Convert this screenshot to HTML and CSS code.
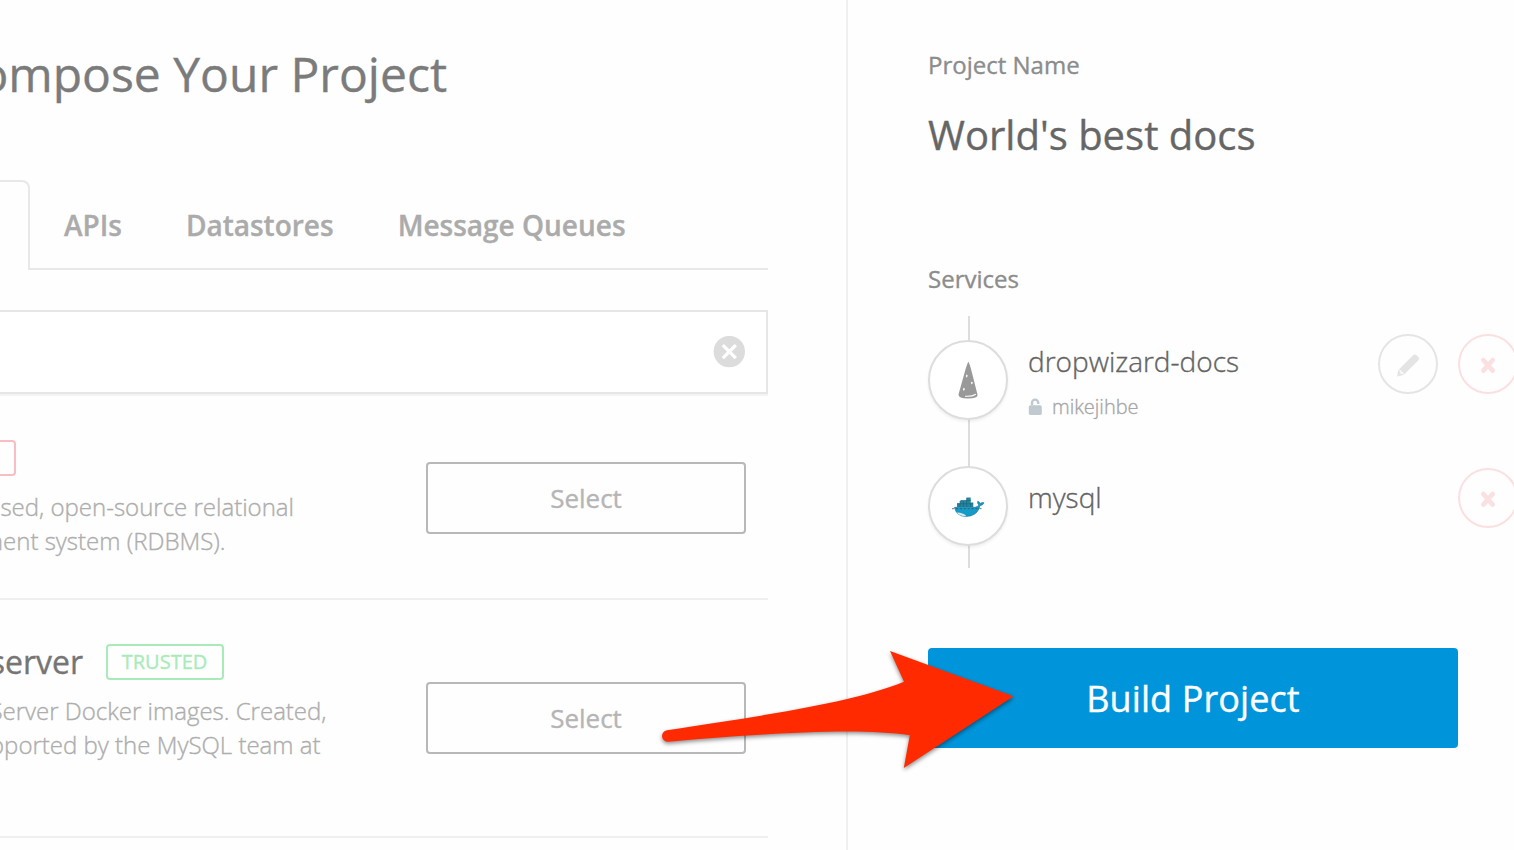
FILE: index.html
```
<!DOCTYPE html>
<html lang="en">
<head>
<meta charset="utf-8">
<title>Compose Your Project</title>
<link rel="stylesheet" href="styles.css">
</head>
<body>
<main class="compose">
  <h1 class="title">Compose Your Project</h1>
  <nav class="tabs">
    <span class="tab-active"></span>
    <span class="tab">APIs</span>
    <span class="tab">Datastores</span>
    <span class="tab">Message Queues</span>
  </nav>
  <div class="search">
    <svg width="32" height="32" viewBox="0 0 32 32"><circle cx="16.3" cy="15.6" r="15.7" fill="#dcdcdc"/><path d="M9.8 9.1 22.8 22.1M22.8 9.1 9.8 22.1" stroke="#fff" stroke-width="3.4"/></svg>
  </div>
  <section class="item item-first">
    <div class="info">
      <div class="heading heading-first"><span class="badge badge-red"></span></div>
      <p class="line line-a">used, open-source relational</p>
      <p class="line line-b">management system (RDBMS).</p>
    </div>
    <button class="select">Select</button>
  </section>
  <section class="item item-second">
    <div class="info">
      <div class="heading heading-second"><span class="name">server</span><span class="badge badge-green">TRUSTED</span></div>
      <p class="line line-c">Server Docker images. Created,</p>
      <p class="line line-d">supported by the MySQL team at</p>
    </div>
    <button class="select">Select</button>
  </section>
</main>
<aside class="summary">
  <div class="label">Project Name</div>
  <div class="project">World's best docs</div>
  <div class="label label-services">Services</div>
  <ul class="services">
    <li class="service">
      <span class="avatar">
        <svg width="24" height="40" viewBox="0 0 24 40"><path d="M12.3 1.5Q11 4.5 9.6 9L2.5 34.5Q2.2 38.6 12 38.6Q21.7 38.4 21.6 35L15 9Q13.8 4.2 12.3 1.5Z" fill="#999"/><g fill="#fff"><path d="m10.8 14.2.9 1.6-.9 2-1-1.8ZM15.9 21.4l1 1.4-1 1.8-1.1-1.7ZM7.9 27.5l1 1.5-1 2.1-1-1.7Z"/></g><path d="M9 36.2Q16 36.8 19.8 34.2" stroke="#fff" stroke-width="1.1" fill="none"/></svg>
      </span>
      <div class="details">
        <div class="service-name">dropwizard-docs</div>
        <div class="owner">
          <svg width="14" height="18" viewBox="0 0 14 18"><path d="M4 7V4.7a3.1 3.1 0 0 1 6.2 0V6" fill="none" stroke="#bfc9cf" stroke-width="2.4"/><rect x=".8" y="7.3" width="13" height="9.7" rx="1.7" fill="#bfc9cf"/></svg>
          <span>mikejihbe</span>
        </div>
      </div>
      <div class="actions">
        <span class="action edit"><svg width="24" height="26" viewBox="0 0 24 26"><path d="M1 24.5 2.3 18 16.8 3.5Q18.8 1.6 20.8 3.4L22.4 5Q24 6.7 22.2 8.6L7.6 23Z" fill="#e4e4e4"/><path d="M3.2 18.3 4.9 19 4.8 20.9 6.7 20.9 7.4 22.6" fill="none" stroke="#fefefe" stroke-width="1.1"/></svg></span>
        <span class="action remove"><svg width="16" height="18" viewBox="0 0 16 18"><path d="M3.3 4 12.7 14.6M12.7 4 3.3 14.6" stroke="#fbe0e1" stroke-width="4.6" stroke-linecap="round"/></svg></span>
      </div>
    </li>
    <li class="service service-second">
      <span class="avatar">
        <svg width="34" height="22" viewBox="0 0 34 22"><path d="M6 12V8.2h3V5.4h6.5V2.5h4.2v5h2.6V12Z" fill="#24859f"/><path d="M9 6v6M12.4 6v6M15.7 3v9M19.5 8v4M6 8.8h16M10 5.5h10" stroke="#17677d" stroke-width=".6"/><path d="M3.5 12.3H24Q27 11.8 27.8 9.9 26 8.5 26.8 6.2 28.9 7 29.3 8.5 31 7 33 7.7 32 10.3 28.9 10.7 26.7 21.3 14.8 21.5 5.3 21.3 3.5 12.3Z" fill="#159bca" stroke="#176c8c" stroke-width=".6"/><path d="M5.8 17.5Q12 17.4 15.5 21.2 8.4 21.4 5.8 17.5Z" fill="#d8e9ee"/><path d="M1 13.7H32" stroke="#355866" stroke-width=".8" stroke-dasharray="2.2 1.7"/></svg>
      </span>
      <div class="details"><div class="service-name">mysql</div></div>
      <div class="actions">
        <span class="action remove"><svg width="16" height="18" viewBox="0 0 16 18"><path d="M3.3 4 12.7 14.6M12.7 4 3.3 14.6" stroke="#fbe0e1" stroke-width="4.6" stroke-linecap="round"/></svg></span>
      </div>
    </li>
  </ul>
  <button class="build">Build Project</button>
</aside>
<svg class="arrow" width="370" height="130" viewBox="655 645 370 130"><path d="M890 651 1013.7 696.3 903.8 768 909.8 735.2C860 728 780 732.2 668.5 741.7A5.6 5.6 0 0 1 667 730.3C745 718 850 704 904 681.7Z" fill="#ff2a00"/></svg>
</body>
</html>
```
FILE: styles.css
```
* { box-sizing: border-box; }
body {
  margin: 0;
  width: 1514px;
  height: 850px;
  display: flex;
  overflow: hidden;
  position: relative;
  background: #fefefe;
  font-family: "Open Sans", sans-serif;
  -webkit-text-stroke: .35px;
}
h1, p, ul { margin: 0; padding: 0; }
svg { display: block; flex: none; }
button { font-family: inherit; padding: 0; }

.compose { width: 848px; height: 850px; flex: none; border-right: 2px solid #efefef; padding-top: 40px; overflow: hidden; }
.title { width: 447px; display: flex; justify-content: flex-end; white-space: nowrap; font-size: 48px; line-height: 67px; font-weight: 400; color: #7b7b7b; }
.tabs { display: flex; height: 90px; width: 768px; margin-top: 73px; font-size: 28px; line-height: 91px; font-weight: 600; color: #ababab; }
.tab-active { width: 30px; flex: none; border: 2px solid #e8e8e8; border-width: 2px 2px 0 0; border-top-right-radius: 8px; }
.tab { height: 90px; border-bottom: 2px solid #e8e8e8; padding: 0 32px; white-space: nowrap; }
.tab:nth-child(2) { padding-left: 34px; }
.tab:last-child { flex: 1; }
.search { width: 768px; height: 84px; margin-top: 40px; padding: 0 21px 0 0; display: flex; justify-content: flex-end; align-items: center; background: #fff; border: 2px solid #e6e6e6; border-left: 0; box-shadow: 0 2px 0 #f3f3f3; }
.item { width: 768px; display: flex; justify-content: space-between; padding-right: 22px; border-bottom: 2px solid #efefef; }
.item-first { height: 206px; padding-top: 46px; }
.item-second { height: 238px; padding-top: 44px; }
.info { width: 326px; }
.heading { height: 36px; display: flex; align-items: center; justify-content: flex-end; }
.heading-first { width: 16px; margin-bottom: 14px; }
.heading-second { width: 224px; margin-bottom: 14px; }
.name { font-size: 32px; line-height: 36px; color: #757575; margin-right: 23px; }
.badge { flex: none; height: 36px; border: 2px solid; border-radius: 4px; font-size: 20px; line-height: 32px; text-align: center; }
.badge-red { width: 60px; color: #f9bec1; }
.badge-green { width: 118px; padding-right: 1px; color: #a9ebb8; }
.line { display: flex; justify-content: flex-end; white-space: nowrap; font-size: 24px; line-height: 34px; font-weight: 300; color: #adadad; }
.line-a { width: 294px; }
.line-b { width: 225.5px; }
.line-c { width: 326.5px; }
.line-d { width: 320.5px; }
.select { width: 320px; height: 72px; padding-bottom: 1px; border: 2px solid #b8b8b8; border-radius: 4px; background: transparent; font-size: 26px; color: #b5b5b5; }
.item-first .select { margin-top: 22px; }
.item-second .select { margin-top: 38px; }

.summary { flex: none; width: 666px; padding: 48px 0 0 80px; }
.label { font-size: 24px; line-height: 34px; color: #8c8c8c; }
.project { font-size: 40px; line-height: 56px; margin-top: 25px; color: #666; }
.label-services { margin-top: 99px; }
.services { list-style: none; margin-top: 20px; width: 590px; }
.service { display: flex; height: 126px; padding-top: 24px; background: linear-gradient(#ddd, #ddd) 40px 0 / 2px 100% no-repeat; }
.avatar { width: 80px; height: 80px; flex: none; display: flex; align-items: center; justify-content: center; border: 2px solid #ddd; border-radius: 50%; background: #fff; box-shadow: 0 2px 3px rgba(0, 0, 0, .06); }
.details { width: 350px; padding: 1px 0 0 20px; }
.service-name { font-size: 28px; line-height: 40px; font-weight: 300; color: #636363; }
.service-second .details { padding-top: 11px; }
.owner { display: flex; align-items: center; gap: 10px; margin-top: 12px; font-size: 20px; line-height: 28px; font-weight: 300; color: #a6a6a6; }
.actions { flex: 1; display: flex; justify-content: flex-end; gap: 20px; margin-top: -6px; }
.service-second .actions { margin-top: 2px; }
.action { width: 60px; height: 60px; flex: none; display: flex; align-items: center; justify-content: center; border: 2px solid #e5e5e5; border-radius: 50%; }
.edit svg { margin-top: 1px; }
.remove { border-color: #fbe0e1; }
.remove svg { margin-top: 2px; }
.build { display: block; width: 530px; height: 100px; margin-top: 80px; border: 0; border-radius: 4px; background: #0095db; color: #fff; font-size: 36px; letter-spacing: .1px; }

/* Pointer laid over both columns */
.arrow { position: absolute; left: 655px; top: 645px; overflow: visible; filter: drop-shadow(0 2px 2px rgba(0, 0, 0, .45)); }
```
